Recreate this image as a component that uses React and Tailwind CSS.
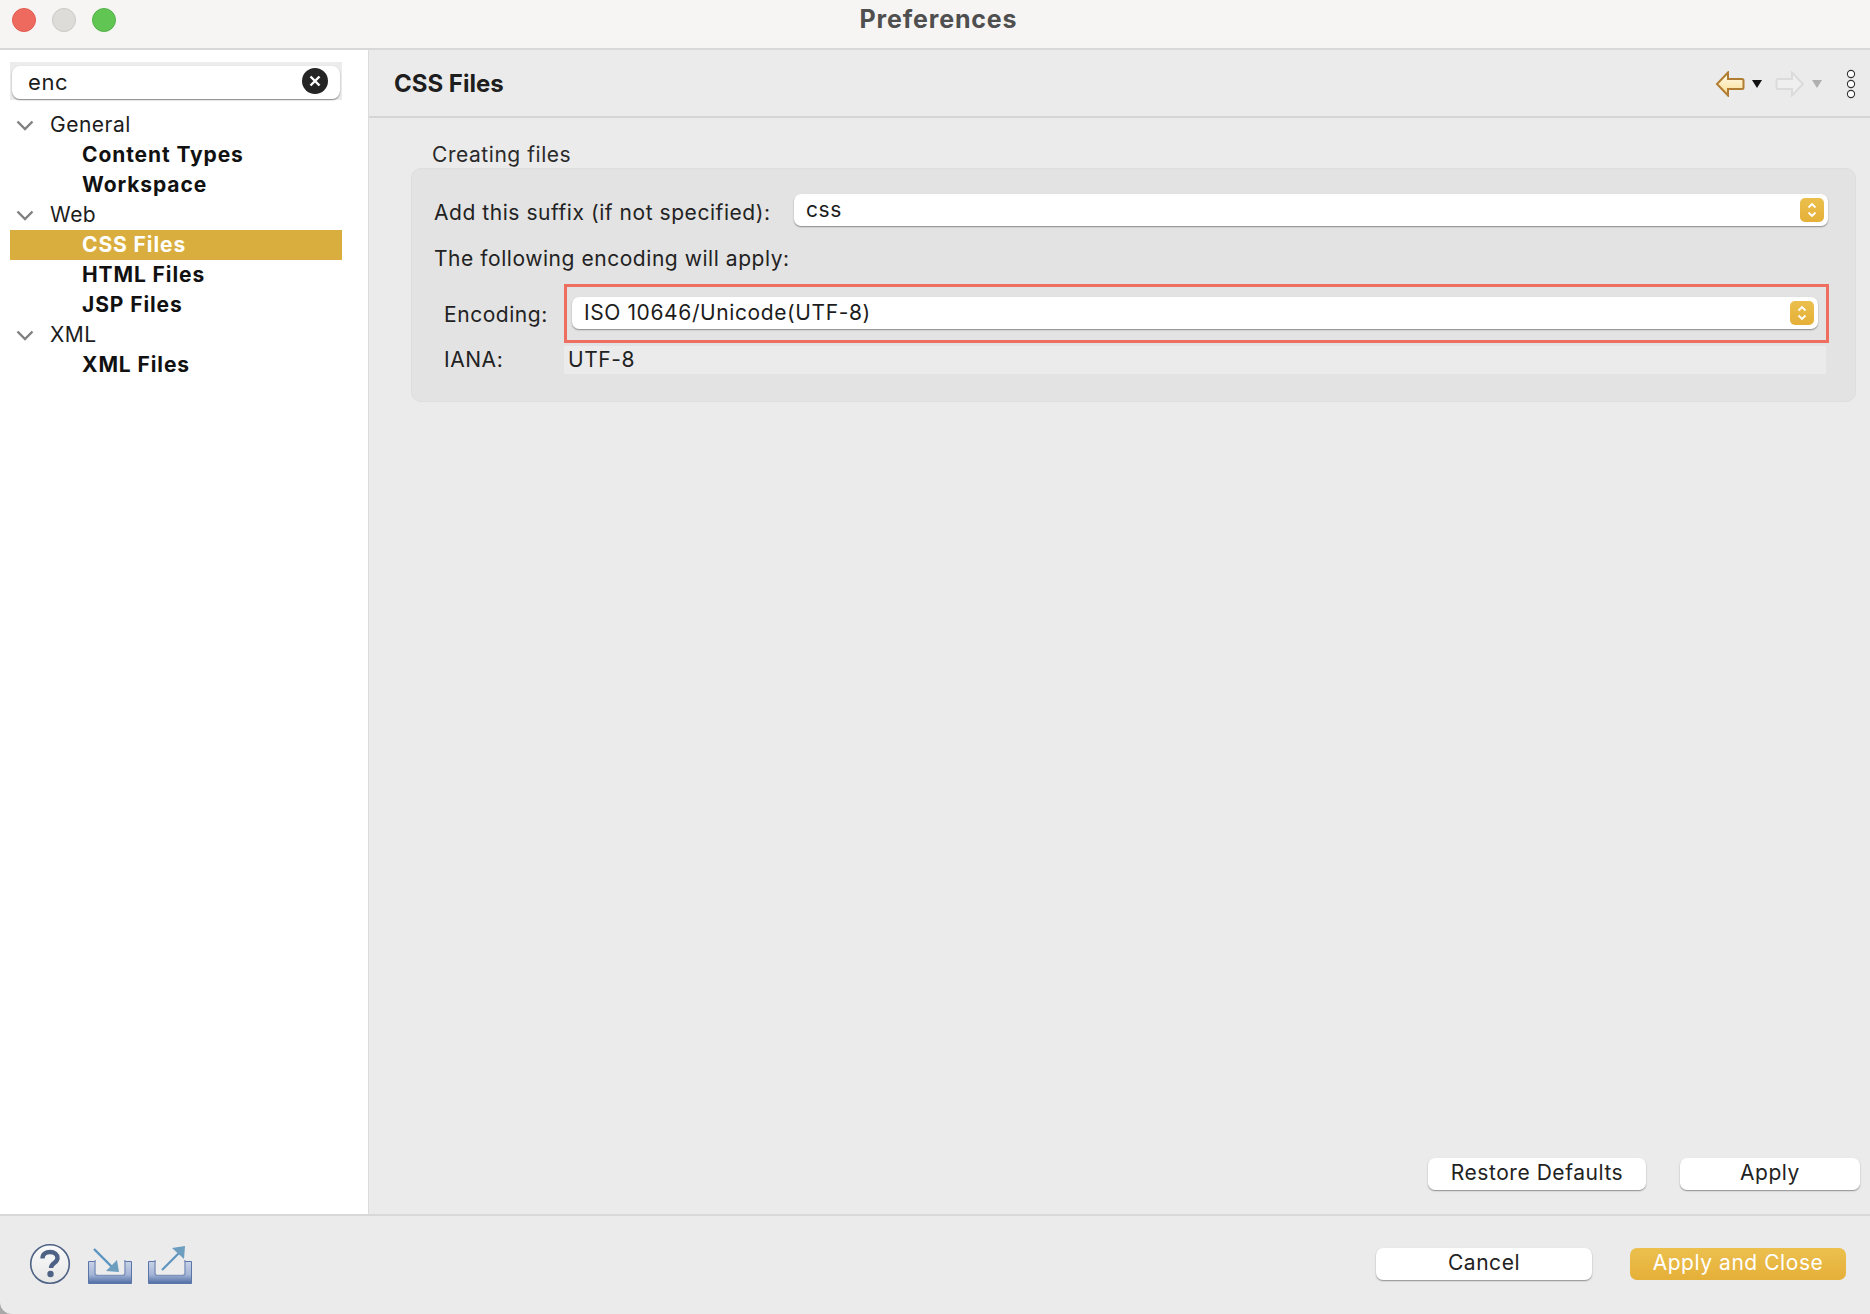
import React from "react";

const font = { fontFamily: "Inter, 'Noto Sans', sans-serif" };

function Chevron() {
  return (
    <svg width="18" height="12" viewBox="0 0 18 12" className="shrink-0">
      <path d="M1.5 2.5 L9 10 L16.5 2.5" fill="none" stroke="#808080" strokeWidth="2.4" />
    </svg>
  );
}

function TreeParent({ label }) {
  return (
    <div className="flex h-[30px] items-center pl-[16px] text-[21px] tracking-[0.5px] text-[#1c1c1c]">
      <Chevron />
      <span className="ml-[16px]">{label}</span>
    </div>
  );
}

function TreeChild({ label, active }) {
  return (
    <div
      className={
        "ml-[10px] flex h-[30px] w-[332px] items-center pl-[72px] text-[21px] font-bold tracking-[0.9px] " +
        (active ? "bg-[#d9ae3e] text-white" : "text-[#111111]")
      }
    >
      {label}
    </div>
  );
}

function Stepper() {
  return (
    <div className="flex h-[24px] w-[24px] items-center justify-center rounded-[5px] bg-gradient-to-b from-[#ebbf4c] to-[#e5b038]">
      <svg width="14" height="18" viewBox="0 0 14 18">
        <path d="M3.5 6.5 L7 3 L10.5 6.5 M3.5 11.5 L7 15 L10.5 11.5" fill="none" stroke="#ffffff" strokeWidth="1.8" />
      </svg>
    </div>
  );
}

function Combo({ text, className }) {
  return (
    <div
      className={
        "flex h-[32px] items-center justify-between rounded-[7px] bg-white pr-[4px] text-[21px] tracking-[0.6px] text-[#1c1c1c] shadow-[0_1px_1.5px_rgba(0,0,0,0.4)] " +
        className
      }
    >
      <span>{text}</span>
      <Stepper />
    </div>
  );
}

function Btn({ children, className }) {
  return (
    <button
      className={
        "flex h-[32px] items-center justify-center rounded-[7px] bg-white pb-[2px] text-[21px] tracking-[0.55px] text-[#222222] shadow-[0_1px_1.5px_rgba(0,0,0,0.4)] " +
        className
      }
    >
      {children}
    </button>
  );
}

function BackArrow() {
  return (
    <svg width="30" height="26" viewBox="0 0 30 26">
      <defs>
        <linearGradient id="back" x1="0" y1="0" x2="0" y2="1">
          <stop offset="0" stopColor="#fffdf0" />
          <stop offset="1" stopColor="#fbdc8e" />
        </linearGradient>
      </defs>
      <path
        d="M13 1.5 L2 13 L13 24.5 L13 18 L27 18 Q28.5 18 28.5 16.5 L28.5 9.5 Q28.5 8 27 8 L13 8 Z"
        fill="url(#back)"
        stroke="#b07d33"
        strokeWidth="2"
      />
    </svg>
  );
}

function ForwardArrow() {
  return (
    <svg width="30" height="26" viewBox="0 0 30 26">
      <path
        d="M17 1.5 L28 13 L17 24.5 L17 18 L3 18 Q1.5 18 1.5 16.5 L1.5 9.5 Q1.5 8 3 8 L17 8 Z"
        fill="#efefef"
        stroke="#dbdbdb"
        strokeWidth="2"
      />
    </svg>
  );
}

function Triangle({ color }) {
  return (
    <svg width="10" height="8" viewBox="0 0 10 8">
      <path d="M0 0 L10 0 L5 8 Z" fill={color} />
    </svg>
  );
}

function Dots() {
  return (
    <svg width="10" height="30" viewBox="0 0 10 30">
      <circle cx="5" cy="5" r="3.6" fill="#fff" stroke="#333" strokeWidth="1.1" />
      <circle cx="5" cy="15" r="3.6" fill="#fff" stroke="#333" strokeWidth="1.1" />
      <circle cx="5" cy="25" r="3.6" fill="#fff" stroke="#333" strokeWidth="1.1" />
    </svg>
  );
}

function HelpIcon() {
  return (
    <svg width="42" height="42" viewBox="0 0 42 42">
      <defs>
        <linearGradient id="help" x1="0" y1="0" x2="0" y2="1">
          <stop offset="0" stopColor="#fbfbfb" />
          <stop offset="1" stopColor="#e6e6e6" />
        </linearGradient>
      </defs>
      <circle cx="21" cy="21" r="19.3" fill="url(#help)" stroke="#4e6285" strokeWidth="1.6" />
      <path
        d="M13.5 15.5 C13.5 11 17 9 21 9 C25.5 9 28.5 11.5 28.5 15 C28.5 20 22 20 22 25"
        fill="none"
        stroke="#4e6285"
        strokeWidth="4.4"
      />
      <circle cx="21.5" cy="31" r="3.2" fill="#4e6285" />
    </svg>
  );
}

function Tray({ id, arrow }) {
  return (
    <svg width="44" height="38" viewBox="0 0 44 38">
      <defs>
        <linearGradient id={id} x1="0" y1="0" x2="0" y2="1">
          <stop offset="0" stopColor="#c9d3e8" />
          <stop offset="0.6" stopColor="#a3b4d6" />
          <stop offset="1" stopColor="#4f6ca3" />
        </linearGradient>
      </defs>
      <path
        d="M0.5 15.5 L43.5 15.5 L43.5 37.5 L0.5 37.5 Z"
        fill={"url(#" + id + ")"}
        stroke="#5a76a8"
        strokeWidth="1"
      />
      <path d="M7 15 L7 27 Q7 29.5 9.5 29.5 L34.5 29.5 Q37 29.5 37 27 L37 15 Z" fill="#ececec" stroke="#7f93bb" strokeWidth="1.4" />
      <path d="M8 14 L36 14 L36 16 L8 16 Z" fill="#ebebeb" />
      {arrow === "in" ? (
        <>
          <path d="M6 3 L25 22" stroke="#5b94bf" strokeWidth="2.4" />
          <path d="M31 26 L18 25 L29 14 Z" fill="#6d9dbf" />
        </>
      ) : (
        <>
          <path d="M14 24 L32 6" stroke="#5b94bf" strokeWidth="2.2" />
          <path d="M37 0 L24 2 L36 13 Z" fill="#6d9dbf" />
        </>
      )}
    </svg>
  );
}

export default function App() {
  return (
    <div className="h-screen w-full bg-[#a8a8a8]">
      <div className="flex h-full w-full flex-col overflow-hidden rounded-bl-[12px] bg-[#ebebeb] text-[21px] tracking-[0.55px]" style={font}>
        <div className="relative flex h-[50px] shrink-0 items-center border-b-2 border-[#d8d8d8] bg-[#f6f5f4] pb-[8px] pl-[12px]">
          <div className="flex gap-[16px]">
            <div className="h-[24px] w-[24px] rounded-full border border-[#e2594f] bg-[#ee6a5f]" />
            <div className="h-[24px] w-[24px] rounded-full border border-[#c9c8c5] bg-[#dddcd9]" />
            <div className="h-[24px] w-[24px] rounded-full border border-[#55b24a] bg-[#61c554]" />
          </div>
          <div className="absolute left-0 right-0 top-[4px] pl-[7px] text-center text-[25px] font-bold leading-[30px] tracking-[0.85px] text-[#4f4f4f]">
            Preferences
          </div>
        </div>

        <div className="flex min-h-0 flex-1">
          <aside className="flex w-[369px] shrink-0 flex-col border-r border-[#dcdcdc] bg-white pt-[12px]">
            <div className="ml-[10px] h-[38px] w-[332px] bg-[#ececec] px-[2px] pt-[4px]">
              <div className="flex h-[33px] items-center justify-between rounded-[8px] bg-white pl-[16px] pr-[12px] text-[#1c1c1c] shadow-[0_1px_1.5px_rgba(0,0,0,0.45)]">
                <span className="text-[22px]">enc</span>
                <svg width="26" height="26" viewBox="0 0 26 26" className="mb-[3px]">
                  <circle cx="13" cy="13" r="13" fill="#252525" />
                  <path d="M8.5 8.5 L17.5 17.5 M17.5 8.5 L8.5 17.5" stroke="#ffffff" strokeWidth="2.4" />
                </svg>
              </div>
            </div>
            <div className="pt-[10px]">
              <TreeParent label="General" />
              <TreeChild label="Content Types" />
              <TreeChild label="Workspace" />
              <TreeParent label="Web" />
              <TreeChild label="CSS Files" active />
              <TreeChild label="HTML Files" />
              <TreeChild label="JSP Files" />
              <TreeParent label="XML" />
              <TreeChild label="XML Files" />
            </div>
          </aside>

          <main className="flex min-w-0 flex-1 flex-col">
            <div className="flex h-[68px] shrink-0 items-center justify-between border-b-2 border-[#d5d5d5] pl-[25px] pr-[14px] pt-[2px]">
              <h1 className="text-[24px] font-bold tracking-[0px] text-[#1e1e1e]">CSS Files</h1>
              <div className="flex items-center">
                <BackArrow />
                <span className="ml-[7px]"><Triangle color="#111111" /></span>
                <span className="ml-[13px]"><ForwardArrow /></span>
                <span className="ml-[7px]"><Triangle color="#b0b0b0" /></span>
                <span className="ml-[24px]"><Dots /></span>
              </div>
            </div>

            <div className="pl-[42px] pr-[14px] pt-[25px]">
              <div className="mb-[1px] pl-[21px] leading-[24px] text-[#2a2a2a]">Creating files</div>
              <div className="h-[234px] rounded-[10px] border border-[#dedede] bg-[#e3e3e3] pl-[22px] pr-[26px] pt-[25px]">
                <div className="flex items-center">
                  <span className="w-[360px] shrink-0 pt-[5px] leading-[24px] text-[#222222]">Add this suffix (if not specified):</span>
                  <Combo text="css" className="mr-[1px] flex-1 pl-[12px]" />
                </div>
                <div className="mt-[20px] leading-[26px] text-[#222222]">The following encoding will apply:</div>
                <div className="mt-[12px] flex items-center">
                  <span className="w-[130px] shrink-0 pl-[10px] pt-[2px] text-[#222222]">Encoding:</span>
                  <div className="flex h-[59px] flex-1 items-center border-[3px] border-[#ee6f60] pb-[2px] pl-[5px] pr-[8px]">
                    <Combo text="ISO 10646/Unicode(UTF-8)" className="flex-1 pl-[12px]" />
                  </div>
                </div>
                <div className="mt-[3px] flex items-center leading-[28px]">
                  <span className="w-[130px] shrink-0 pl-[10px] text-[#222222]">IANA:</span>
                  <div className="mr-[3px] flex h-[28px] flex-1 items-center bg-[#ebebeb] pl-[4px] text-[#222222]">UTF-8</div>
                </div>
              </div>
            </div>

            <div className="mt-auto flex justify-end gap-[34px] pb-[24px] pr-[10px]">
              <Btn className="w-[218px]">Restore Defaults</Btn>
              <Btn className="w-[180px]">Apply</Btn>
            </div>
          </main>
        </div>

        <footer className="flex h-[100px] shrink-0 items-start justify-between border-t-2 border-[#d8d8d8] pl-[29px] pr-[24px]">
          <div className="flex items-start pt-[27px]">
            <HelpIcon />
            <span className="ml-[17px] mt-[3px]"><Tray id="tray-in" arrow="in" /></span>
            <span className="ml-[16px] mt-[3px]"><Tray id="tray-out" arrow="out" /></span>
          </div>
          <div className="flex gap-[38px] pt-[32px]">
            <Btn className="w-[216px]">Cancel</Btn>
            <button className="flex h-[32px] w-[216px] items-center justify-center rounded-[7px] bg-gradient-to-b from-[#ecc04e] to-[#e5b038] pb-[2px] text-[21px] text-white">
              Apply and Close
            </button>
          </div>
        </footer>
      </div>
    </div>
  );
}
